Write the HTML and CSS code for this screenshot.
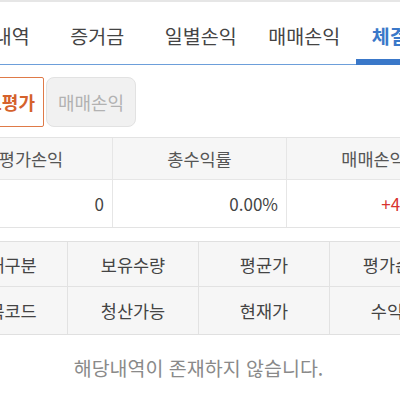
FILE: index.html
```html
<!DOCTYPE html>
<html lang="ko">
<head>
<meta charset="utf-8">
<link rel="stylesheet" href="styles.css">
</head>
<body>
<div class="topline"></div>
<nav class="tabs">
  <div class="tab">잔고내역</div>
  <div class="tab">증거금</div>
  <div class="tab">일별손익</div>
  <div class="tab">매매손익</div>
  <div class="tab active">체결내역</div>
</nav>
<div class="seg">
  <div class="seg-btn on">잔고평가</div>
  <div class="seg-btn off">매매손익</div>
</div>
<div class="summary">
  <div class="cell head">평가손익</div>
  <div class="cell head">총수익률</div>
  <div class="cell head">매매손익</div>
  <div class="cell num">0</div>
  <div class="cell num">0.00%</div>
  <div class="cell num up">+450,000</div>
</div>
<div class="grid">
  <div class="gcell">매매구분</div>
  <div class="gcell">보유수량</div>
  <div class="gcell">평균가</div>
  <div class="gcell">평가손익</div>
  <div class="gcell">종목코드</div>
  <div class="gcell">청산가능</div>
  <div class="gcell">현재가</div>
  <div class="gcell">수익률</div>
</div>
<p class="empty">해당내역이 존재하지 않습니다.</p>
</body>
</html>
```
FILE: styles.css
```css
html, body {
  margin: 0;
  padding: 0;
  background: #ffffff;
  overflow: hidden;
}
body {
  width: 400px;
  height: 400px;
  font-family: "Noto Sans CJK KR", "Noto Sans", sans-serif;
  color: #444;
}
.topline {
  height: 2px;
  background: #e6e6e6;
}
.tabs {
  display: flex;
  height: 62px;
  margin-left: -58px;
  border-bottom: 1px solid #6d9fda;
  width: 520px;
}
.tab {
  flex: 0 0 103.5px;
  box-sizing: border-box;
  display: flex;
  align-items: center;
  justify-content: center;
  padding-top: 5px;
  font-size: 19.5px;
  line-height: 1;
  color: #444;
  white-space: nowrap;
}
.tab.active {
  color: #3a78c9;
  font-weight: 700;
  border-bottom: 6px solid #3a78c9;
  margin-bottom: -1px;
  padding-top: 10px;
}
.seg {
  display: flex;
  gap: 2px;
  margin-top: 12px;
  margin-left: -45px;
  height: 50px;
}
.seg-btn {
  box-sizing: border-box;
  height: 50px;
  display: flex;
  align-items: center;
  justify-content: center;
  font-size: 18px;
  white-space: nowrap;
}
.seg-btn.on {
  width: 89px;
  border: 1px solid #df7a48;
  color: #d5622c;
  font-weight: 700;
  background: #fff;
  border-radius: 2px;
  justify-content: flex-end;
  padding-right: 8px;
}
.seg-btn.off {
  width: 90px;
  border: 1px solid #e2e2e2;
  background: #f1f1f1;
  color: #b2b2b2;
  border-radius: 8px;
}
.summary {
  display: grid;
  grid-template-columns: 174px 174px 174px;
  grid-template-rows: 42px 47px;
  margin-top: 10px;
  margin-left: -62px;
  width: 522px;
  border-top: 1px solid #e3e3e3;
  border-bottom: 1px solid #e3e3e3;
}
.cell {
  display: flex;
  align-items: center;
  font-size: 17.5px;
  border-left: 1px solid #e6e6e6;
  white-space: nowrap;
}
.cell:nth-child(3n+1) {
  border-left: none;
}
.cell.head {
  justify-content: center;
  background: #f6f6f6;
  color: #555;
  border-bottom: 1px solid #e6e6e6;
  padding-left: 12px;
}
.cell:nth-child(2).head {
  padding-left: 0;
}
.cell:nth-child(3).head {
  padding-left: 0;
}
.cell.num {
  justify-content: flex-end;
  padding-right: 8px;
  color: #444;
  font-size: 17px;
}
.cell.up {
  color: #d8342f;
}
.grid {
  display: grid;
  grid-template-columns: repeat(4, 131px);
  grid-template-rows: 45px 47px;
  margin-top: 13px;
  margin-left: -64px;
  width: 524px;
  background: #f6f6f6;
  border-top: 1px solid #e0e0e0;
  border-bottom: 1px solid #e0e0e0;
}
.gcell {
  display: flex;
  align-items: center;
  justify-content: center;
  font-size: 17.5px;
  color: #444;
  border-left: 1px solid #e2e2e2;
  white-space: nowrap;
}
.gcell:nth-child(4n+1) {
  border-left: none;
  padding-left: 6px;
}
.gcell:nth-child(-n+4) {
  border-bottom: 1px solid #e2e2e2;
}
.empty {
  margin: 21px 0 0;
  text-align: center;
  font-size: 19.5px;
  line-height: 24px;
  color: #8a8a8a;
  padding-right: 3px;
}
```
